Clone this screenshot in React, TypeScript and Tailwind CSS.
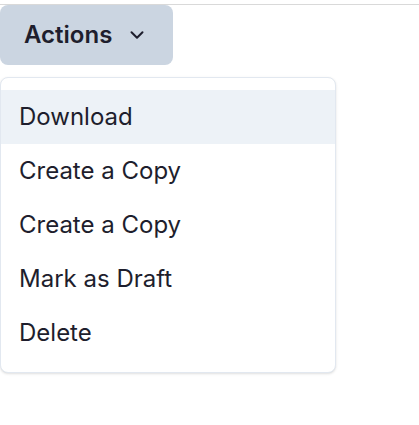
import { ChevronDown } from 'lucide-react';

const items = ['Download', 'Create a Copy', 'Create a Copy', 'Mark as Draft', 'Delete'];

export default function App() {
  return (
    <div className="min-h-screen bg-white font-['Inter',sans-serif] text-[#1e1e2d]">
      <div className="mt-1 border-t border-[#d9d9d9]">
        <button className="flex h-[60px] w-[173px] items-center gap-[14px] rounded-lg bg-[#cbd5e1] pl-6 text-[24px] font-semibold">
          Actions
          <ChevronDown className="h-[22px] w-[22px]" strokeWidth={2.2} />
        </button>
        <div className="mt-3 w-[336px] rounded-lg border border-[#e2e8f0] bg-white py-3 shadow-sm">
          {items.map((label, i) => (
            <div
              key={i}
              className={`flex h-[54px] items-center px-[18px] text-[24px] ${i === 0 ? 'bg-[#edf2f7]' : ''}`}
            >
              {label}
            </div>
          ))}
        </div>
      </div>
    </div>
  );
}
